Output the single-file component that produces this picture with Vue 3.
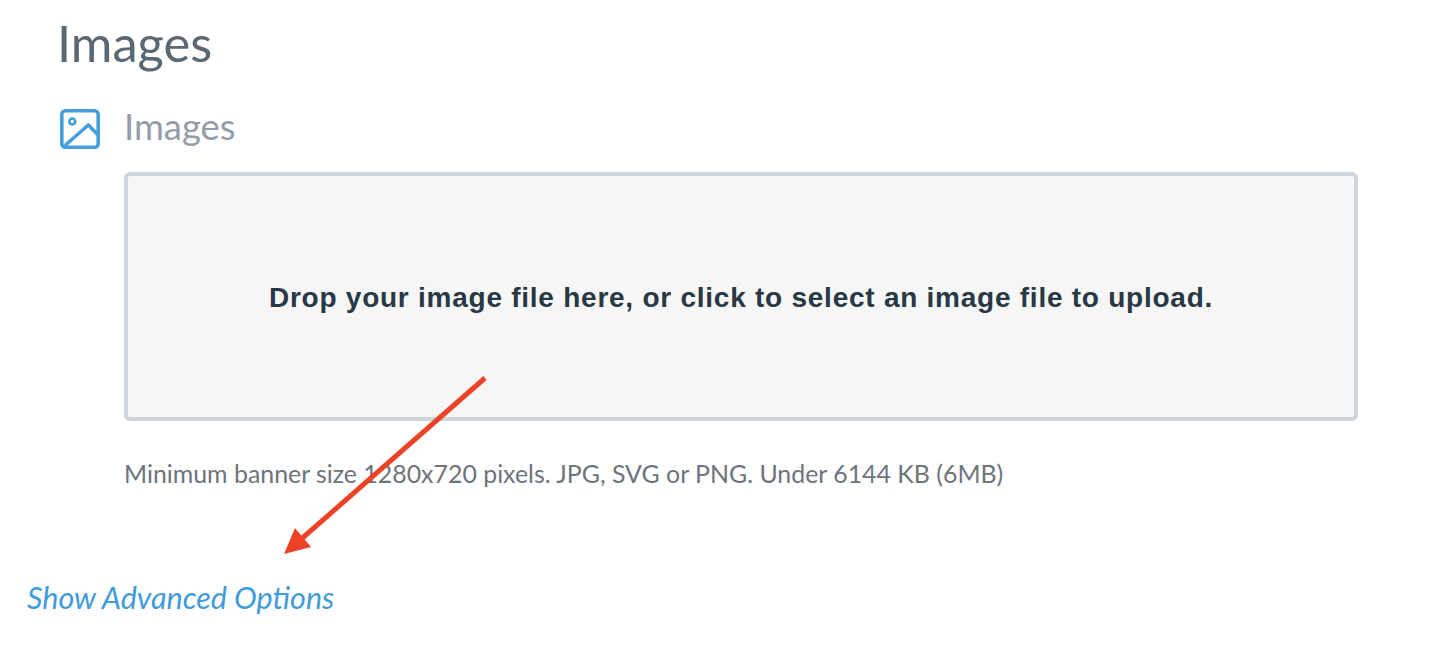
<template>
  <div class="page">
    <h1 class="title">Images</h1>
    <div class="field">
      <svg class="field-icon" viewBox="0 0 40 40" fill="none" stroke="#459fdc" stroke-width="3.6">
        <rect x="1.8" y="1.8" width="36.4" height="36.4" rx="3.5" />
        <circle cx="12.3" cy="12.5" r="3" stroke-width="2.6" />
        <path d="M5 36.5 L28.3 16 L38 26" stroke-linejoin="round" />
      </svg>
      <div class="field-body">
        <div class="label">Images</div>
        <div class="dropzone">
          <p>Drop your image file here, or click to select an image file to upload.</p>
        </div>
        <p class="hint">Minimum banner size 1280x720 pixels. JPG, SVG or PNG. Under 6144 KB (6MB)</p>
      </div>
    </div>
    <a class="advanced" href="#">Show Advanced Options</a>

    <!-- annotation arrow drawn over the page -->
    <svg class="arrow" width="1438" height="648" viewBox="0 0 1438 648">
      <line x1="485" y1="378" x2="299" y2="541" stroke="#ec4226" stroke-width="5" />
      <polygon points="284,554 295,528 311,547" fill="#ec4226" />
    </svg>
  </div>
</template>

<script setup>
</script>

<style scoped>
.page {
  position: relative;
  height: 648px;
  overflow: hidden;
  font-family: Lato, "Open Sans", sans-serif;
  background: #fff;
}

.title {
  margin: 0;
  padding: 13px 0 0 57px;
  font-size: 50.6px;
  line-height: 60px;
  font-weight: 400;
  color: #5a6873;
}

.field {
  display: flex;
  padding: 36px 80px 0 60px;
}

.field-icon {
  width: 40px;
  height: 40px;
  flex-shrink: 0;
}

.field-body {
  flex: 1;
  margin-left: 24px;
  margin-top: -5px;
}

.label {
  font-size: 36.4px;
  line-height: 44px;
  color: #949da7;
}

.dropzone {
  height: 249px;
  box-sizing: border-box;
  margin-top: 24px;
  border: 4px solid #cfd6d9;
  border-radius: 6px;
  background: #f6f6f6;
  display: flex;
  align-items: center;
  justify-content: center;
}

.dropzone p {
  margin: 2px 0 0;
  font-family: "Liberation Sans", Arial, sans-serif;
  font-size: 28px;
  font-weight: 700;
  letter-spacing: 0.75px;
  color: #283845;
}

.hint {
  margin: 35px 0 0;
  font-size: 24.9px;
  line-height: 34px;
  color: #6d747c;
}

.advanced {
  display: block;
  margin: 89px 0 0 27px;
  font-size: 30.5px;
  line-height: 36px;
  font-style: italic;
  color: #3f9bd9;
  text-decoration: none;
}

.arrow {
  position: absolute;
  left: 0;
  top: 0;
  pointer-events: none;
}
</style>
